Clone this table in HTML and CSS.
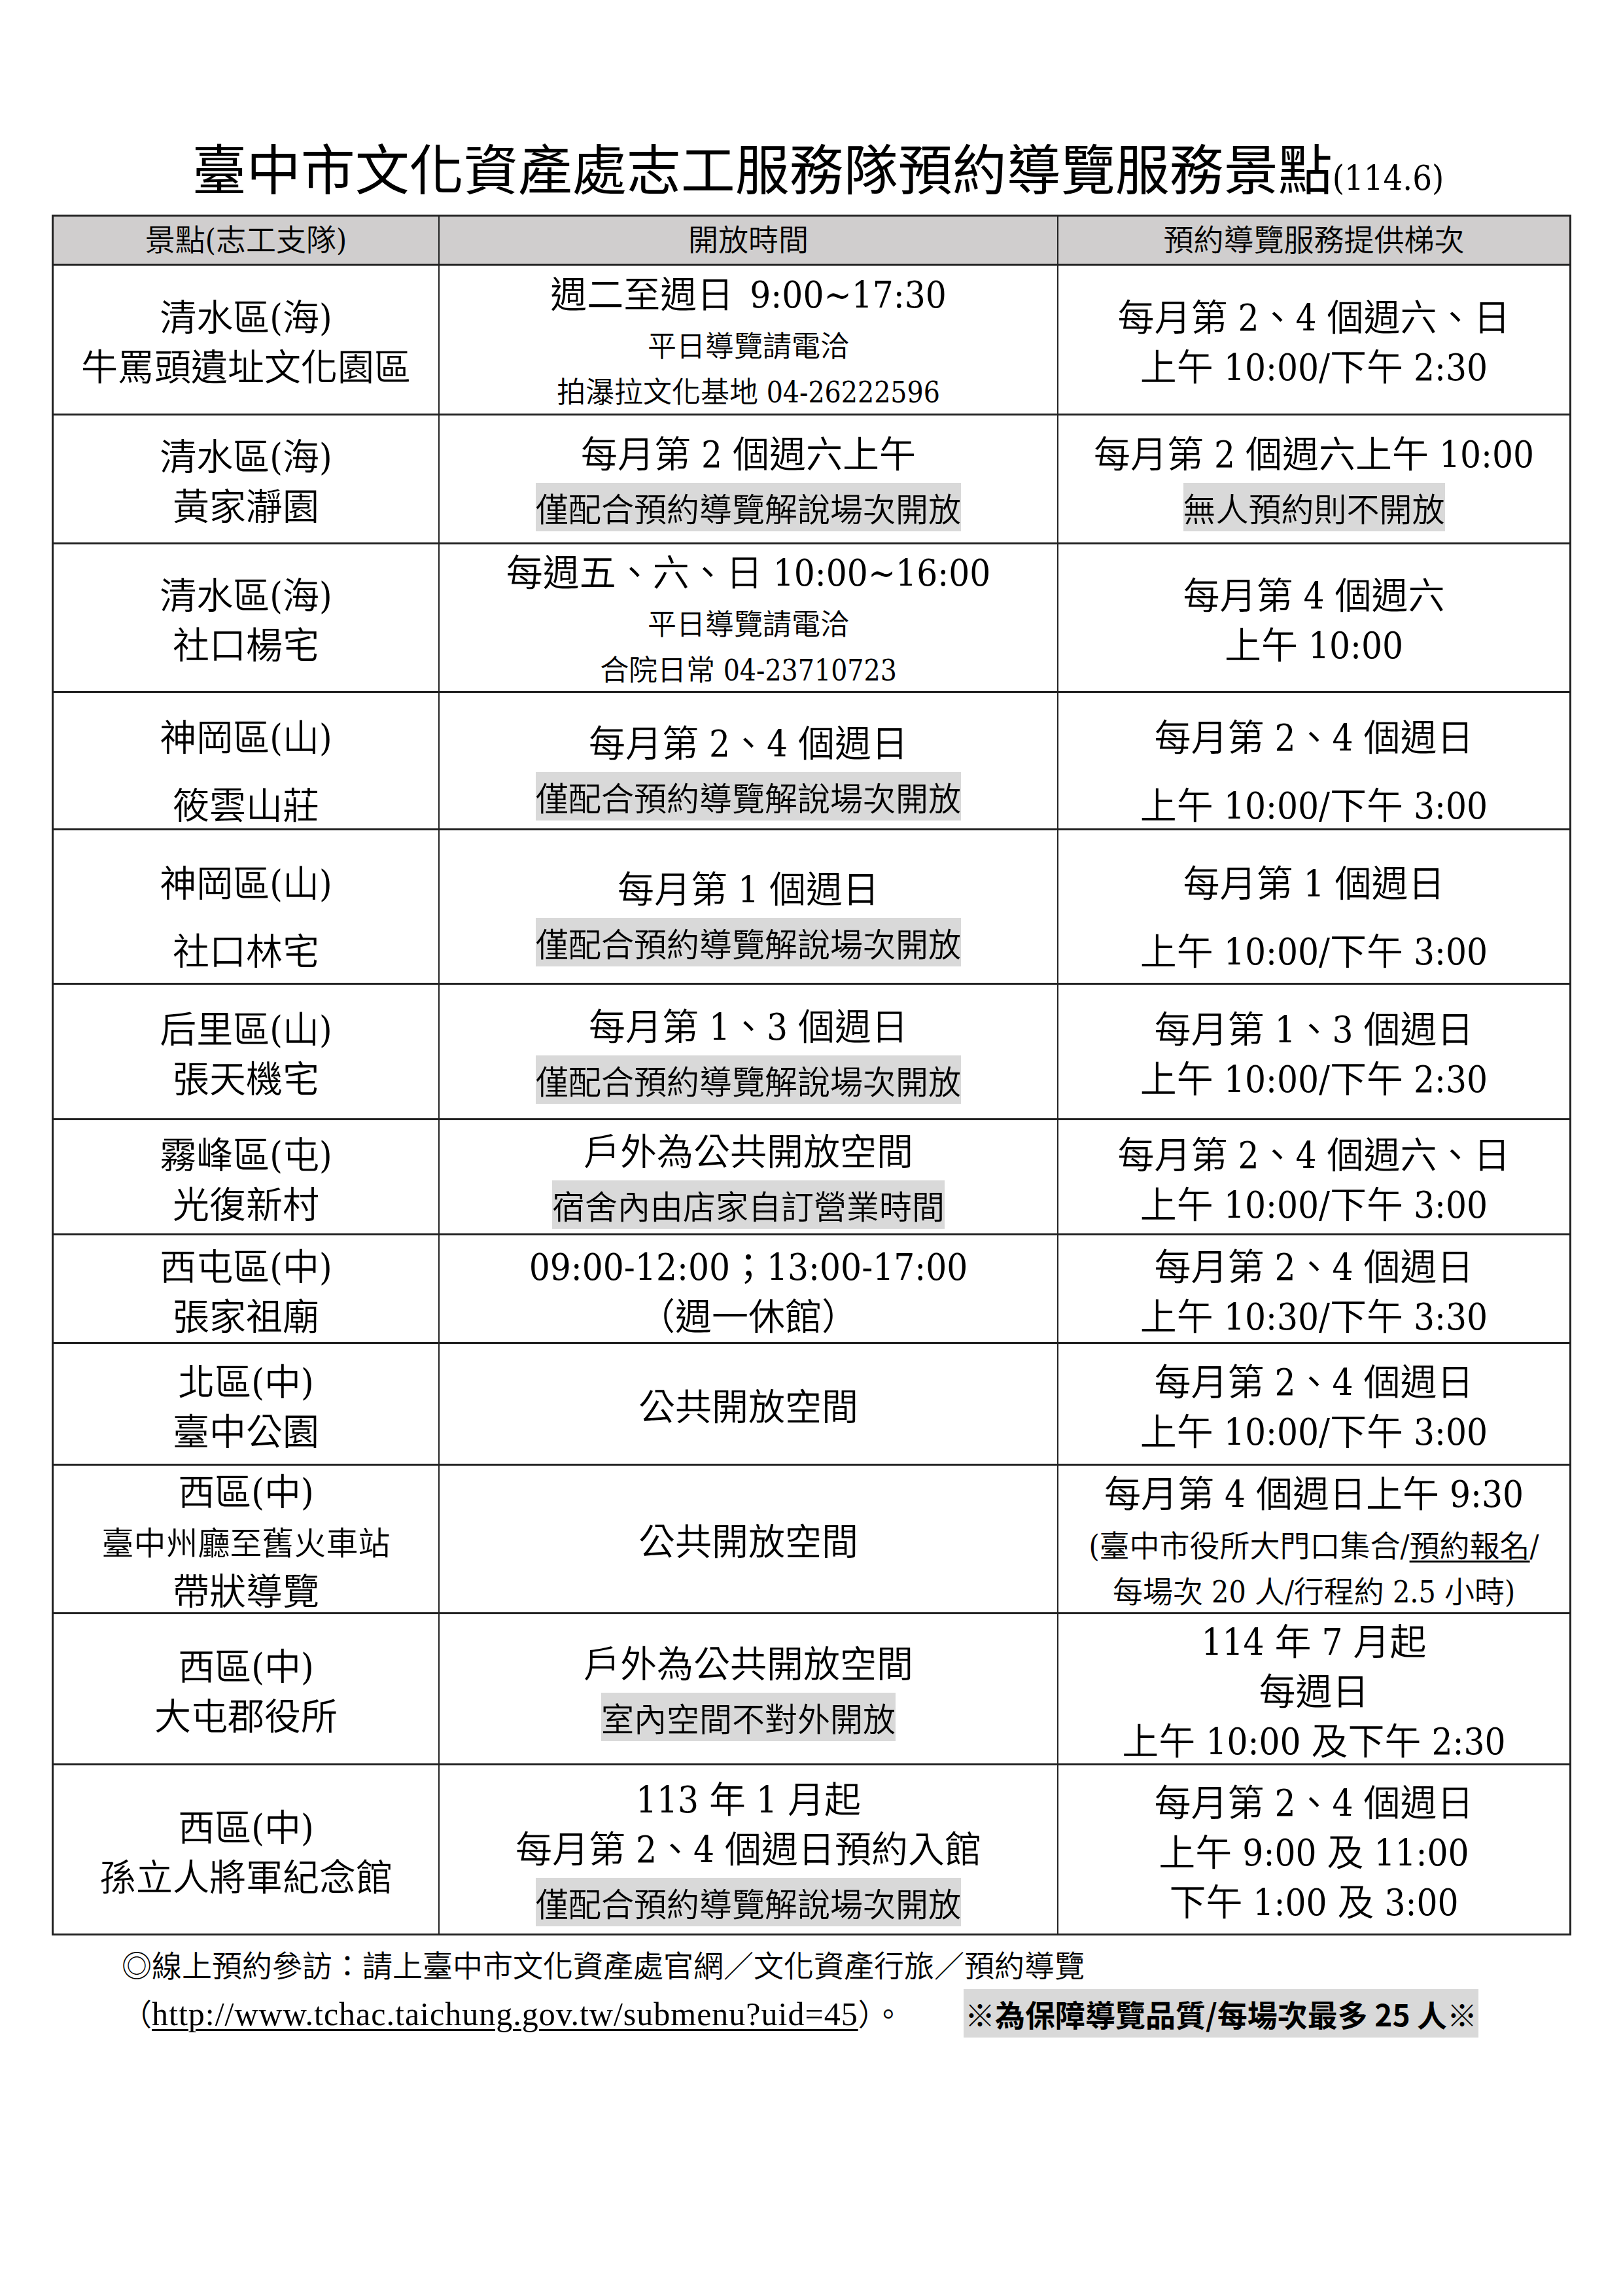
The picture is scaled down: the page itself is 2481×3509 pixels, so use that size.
FILE: index.html
```html
<!DOCTYPE html>
<html lang="zh-Hant">
<head>
<meta charset="utf-8">
<title>臺中市文化資產處志工服務隊預約導覽服務景點</title>
<link rel="stylesheet" href="styles.css">
</head>
<body>
<div class="page">
  <h1 class="title">臺中市文化資產處志工服務隊預約導覽服務景點<span class="title-sub">(114.6)</span></h1>

  <div class="sheet">
    <div class="cell head">景點(志工支隊)</div>
    <div class="cell head">開放時間</div>
    <div class="cell head last">預約導覽服務提供梯次</div>

    <!-- row 1 -->
    <div class="cell"><div class="t">清水區(海)</div><div class="t">牛罵頭遺址文化園區</div></div>
    <div class="cell"><div class="t">週二至週日&ensp;9:00~17:30</div><div class="s">平日導覽請電洽</div><div class="s">拍瀑拉文化基地 04-26222596</div></div>
    <div class="cell last"><div class="t">每月第 2、4 個週六、日</div><div class="t">上午 10:00/下午 2:30</div></div>

    <!-- row 2 -->
    <div class="cell"><div class="t">清水區(海)</div><div class="t">黃家瀞園</div></div>
    <div class="cell"><div class="t">每月第 2 個週六上午</div><div class="hl"><span class="mark">僅配合預約導覽解說場次開放</span></div></div>
    <div class="cell last"><div class="t">每月第 2 個週六上午 10:00</div><div class="hl"><span class="mark">無人預約則不開放</span></div></div>

    <!-- row 3 -->
    <div class="cell"><div class="t">清水區(海)</div><div class="t">社口楊宅</div></div>
    <div class="cell"><div class="t">每週五、六、日 10:00~16:00</div><div class="s">平日導覽請電洽</div><div class="s">合院日常 04-23710723</div></div>
    <div class="cell last"><div class="t">每月第 4 個週六</div><div class="t">上午 10:00</div></div>

    <!-- row 4 -->
    <div class="cell low"><div class="t wide">神岡區(山)</div><div class="t wide">筱雲山莊</div></div>
    <div class="cell low"><div class="t">每月第 2、4 個週日</div><div class="hl"><span class="mark">僅配合預約導覽解說場次開放</span></div></div>
    <div class="cell low last"><div class="t wide">每月第 2、4 個週日</div><div class="t wide">上午 10:00/下午 3:00</div></div>

    <!-- row 5 -->
    <div class="cell low"><div class="t wide">神岡區(山)</div><div class="t wide">社口林宅</div></div>
    <div class="cell low"><div class="t">每月第 1 個週日</div><div class="hl"><span class="mark">僅配合預約導覽解說場次開放</span></div></div>
    <div class="cell low last"><div class="t wide">每月第 1 個週日</div><div class="t wide">上午 10:00/下午 3:00</div></div>

    <!-- row 6 -->
    <div class="cell"><div class="t">后里區(山)</div><div class="t">張天機宅</div></div>
    <div class="cell"><div class="t">每月第 1、3 個週日</div><div class="hl"><span class="mark">僅配合預約導覽解說場次開放</span></div></div>
    <div class="cell last"><div class="t">每月第 1、3 個週日</div><div class="t">上午 10:00/下午 2:30</div></div>

    <!-- row 7 -->
    <div class="cell"><div class="t">霧峰區(屯)</div><div class="t">光復新村</div></div>
    <div class="cell"><div class="t">戶外為公共開放空間</div><div class="hl"><span class="mark">宿舍內由店家自訂營業時間</span></div></div>
    <div class="cell last"><div class="t">每月第 2、4 個週六、日</div><div class="t">上午 10:00/下午 3:00</div></div>

    <!-- row 8 -->
    <div class="cell"><div class="t">西屯區(中)</div><div class="t">張家祖廟</div></div>
    <div class="cell"><div class="t">09:00-12:00；13:00-17:00</div><div class="t">（週一休館）</div></div>
    <div class="cell last"><div class="t">每月第 2、4 個週日</div><div class="t">上午 10:30/下午 3:30</div></div>

    <!-- row 9 -->
    <div class="cell"><div class="t">北區(中)</div><div class="t">臺中公園</div></div>
    <div class="cell"><div class="t">公共開放空間</div></div>
    <div class="cell last"><div class="t">每月第 2、4 個週日</div><div class="t">上午 10:00/下午 3:00</div></div>

    <!-- row 10 -->
    <div class="cell"><div class="t">西區(中)</div><div class="s2 s2-wide">臺中州廳至舊火車站</div><div class="t">帶狀導覽</div></div>
    <div class="cell"><div class="t">公共開放空間</div></div>
    <div class="cell last"><div class="t">每月第 4 個週日上午 9:30</div><div class="s2">(臺中市役所大門口集合/<span class="ul">預約報名</span>/</div><div class="s2">每場次 20 人/行程約 2.5 小時)</div></div>

    <!-- row 11 -->
    <div class="cell"><div class="t">西區(中)</div><div class="t">大屯郡役所</div></div>
    <div class="cell"><div class="t">戶外為公共開放空間</div><div class="hl"><span class="mark">室內空間不對外開放</span></div></div>
    <div class="cell last"><div class="t">114 年 7 月起</div><div class="t">每週日</div><div class="t">上午 10:00 及下午 2:30</div></div>

    <!-- row 12 -->
    <div class="cell"><div class="t">西區(中)</div><div class="t">孫立人將軍紀念館</div></div>
    <div class="cell"><div class="t">113 年 1 月起</div><div class="t">每月第 2、4 個週日預約入館</div><div class="hl"><span class="mark">僅配合預約導覽解說場次開放</span></div></div>
    <div class="cell last"><div class="t">每月第 2、4 個週日</div><div class="t">上午 9:00 及 11:00</div><div class="t">下午 1:00 及 3:00</div></div>
  </div>

  <div class="foot">
    <p class="foot-line">◎線上預約參訪：請上臺中市文化資產處官網／文化資產行旅／預約導覽</p>
    <div class="foot-line foot-row">
      <span class="foot-link">（<span class="url">http://www.tchac.taichung.gov.tw/submenu?uid=45</span>）。</span>
      <span class="note">※為保障導覽品質/每場次最多 25 人※</span>
    </div>
  </div>
</div>
</body>
</html>
```

FILE: styles.css
```css
html, body {
  margin: 0;
  padding: 0;
  background: #ffffff;
}

body {
  width: 2481px;
  color: #000000;
  font-family: "DejaVu Serif Condensed", "Liberation Serif", "Noto Sans CJK TC", serif;
  font-weight: 350;
}

.page {
  width: 2481px;
}

.title {
  margin: 0;
  padding: 202px 0 6px 20px;
  font-size: 83px;
  line-height: 120px;
  font-weight: normal;
  text-align: center;
  white-space: nowrap;
}

.title-sub {
  font-size: 52px;
  line-height: 1;
}

.sheet {
  display: grid;
  grid-template-columns: 590px 946px 784px;
  grid-template-rows: 75px 229px 197px 227px 210px 236px 207px 176px 166px 186px 227px 231px 260px;
  width: max-content;
  margin-left: 79px;
  border-top: 3px solid #222222;
  border-left: 3px solid #222222;
}

.cell {
  box-sizing: border-box;
  display: flex;
  flex-direction: column;
  align-items: center;
  justify-content: center;
  padding-top: 10px;
  border-right: 2px solid #222222;
  border-bottom: 3px solid #222222;
  text-align: center;
  white-space: nowrap;
  overflow: visible;
}

.cell.last {
  border-right-width: 3px;
}

.cell.low {
  padding-top: 34px;
}

.cell.head {
  padding-top: 0;
  background: #d0cece;
  font-size: 46px;
  line-height: 60px;
}

.t {
  font-size: 56px;
  line-height: 76px;
}

.t.wide {
  line-height: 104px;
}

.s {
  font-size: 44px;
  line-height: 70px;
}

.s2 {
  font-size: 46px;
  line-height: 70px;
}

.s2.s2-wide {
  font-size: 49px;
}

.t + .s,
.t + .s2 {
  margin-top: 6px;
}

.hl {
  font-size: 50px;
  line-height: 76px;
}

.t + .hl {
  margin-top: 4px;
}

.mark {
  font-family: "Noto Sans CJK TC", sans-serif;
  background: #d9d9d9;
  padding: 1px 0;
}

.ul {
  text-decoration: underline;
  text-decoration-thickness: 3px;
  text-underline-offset: 6px;
}

.foot {
  margin: 6px 0 0 186px;
  font-family: "Noto Sans CJK TC", sans-serif;
}

.foot-line {
  margin: 0;
  font-size: 46px;
  line-height: 74px;
  white-space: nowrap;
}

.foot-row {
  display: flex;
  align-items: center;
}

.foot-link {
  width: 1287px;
  flex: none;
}

.url {
  font-family: "Liberation Serif", serif;
  font-size: 50px;
  letter-spacing: 1px;
  text-decoration: underline;
  text-decoration-thickness: 3px;
  text-underline-offset: 6px;
}

.note {
  font-weight: bold;
  background: #d9d9d9;
  padding: 0 2px;
}
```
